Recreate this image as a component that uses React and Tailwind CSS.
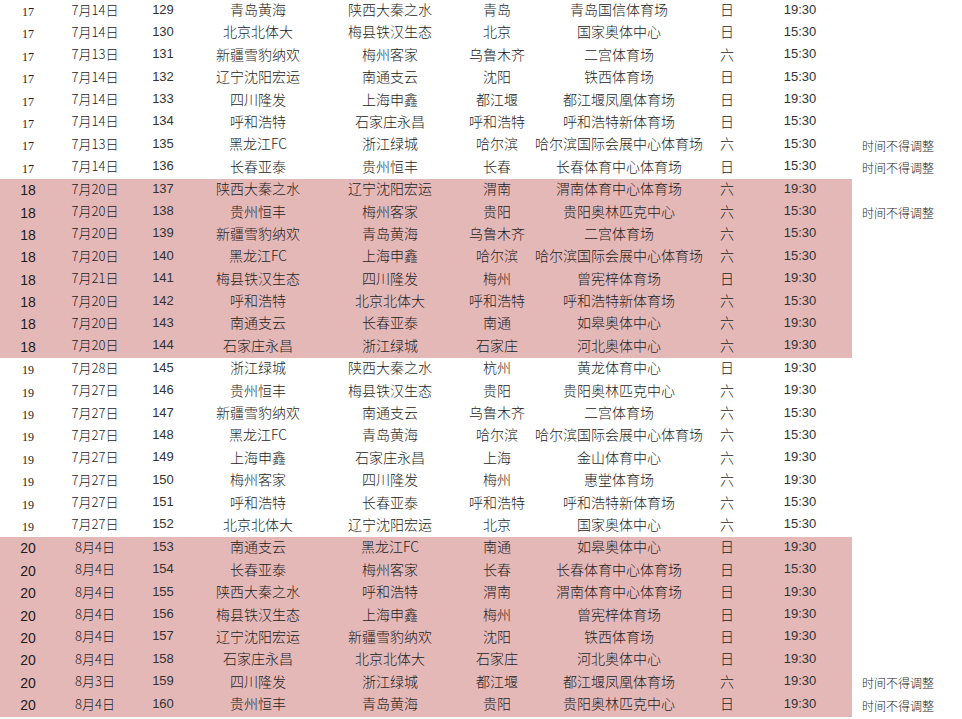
import React from "react";

const rows = [
  ["17", "7月14日", "129", "青岛黄海", "陕西大秦之水", "青岛", "青岛国信体育场", "日", "19:30", ""],
  ["17", "7月14日", "130", "北京北体大", "梅县铁汉生态", "北京", "国家奥体中心", "日", "15:30", ""],
  ["17", "7月13日", "131", "新疆雪豹纳欢", "梅州客家", "乌鲁木齐", "二宫体育场", "六", "15:30", ""],
  ["17", "7月14日", "132", "辽宁沈阳宏运", "南通支云", "沈阳", "铁西体育场", "日", "15:30", ""],
  ["17", "7月14日", "133", "四川隆发", "上海申鑫", "都江堰", "都江堰凤凰体育场", "日", "19:30", ""],
  ["17", "7月14日", "134", "呼和浩特", "石家庄永昌", "呼和浩特", "呼和浩特新体育场", "日", "15:30", ""],
  ["17", "7月13日", "135", "黑龙江FC", "浙江绿城", "哈尔滨", "哈尔滨国际会展中心体育场", "六", "15:30", "时间不得调整"],
  ["17", "7月14日", "136", "长春亚泰", "贵州恒丰", "长春", "长春体育中心体育场", "日", "15:30", "时间不得调整"],
  ["18", "7月20日", "137", "陕西大秦之水", "辽宁沈阳宏运", "渭南", "渭南体育中心体育场", "六", "19:30", ""],
  ["18", "7月20日", "138", "贵州恒丰", "梅州客家", "贵阳", "贵阳奥林匹克中心", "六", "15:30", "时间不得调整"],
  ["18", "7月20日", "139", "新疆雪豹纳欢", "青岛黄海", "乌鲁木齐", "二宫体育场", "六", "15:30", ""],
  ["18", "7月20日", "140", "黑龙江FC", "上海申鑫", "哈尔滨", "哈尔滨国际会展中心体育场", "六", "15:30", ""],
  ["18", "7月21日", "141", "梅县铁汉生态", "四川隆发", "梅州", "曾宪梓体育场", "日", "19:30", ""],
  ["18", "7月20日", "142", "呼和浩特", "北京北体大", "呼和浩特", "呼和浩特新体育场", "六", "15:30", ""],
  ["18", "7月20日", "143", "南通支云", "长春亚泰", "南通", "如皋奥体中心", "六", "19:30", ""],
  ["18", "7月20日", "144", "石家庄永昌", "浙江绿城", "石家庄", "河北奥体中心", "六", "19:30", ""],
  ["19", "7月28日", "145", "浙江绿城", "陕西大秦之水", "杭州", "黄龙体育中心", "日", "19:30", ""],
  ["19", "7月27日", "146", "贵州恒丰", "梅县铁汉生态", "贵阳", "贵阳奥林匹克中心", "六", "19:30", ""],
  ["19", "7月27日", "147", "新疆雪豹纳欢", "南通支云", "乌鲁木齐", "二宫体育场", "六", "15:30", ""],
  ["19", "7月27日", "148", "黑龙江FC", "青岛黄海", "哈尔滨", "哈尔滨国际会展中心体育场", "六", "15:30", ""],
  ["19", "7月27日", "149", "上海申鑫", "石家庄永昌", "上海", "金山体育中心", "六", "19:30", ""],
  ["19", "7月27日", "150", "梅州客家", "四川隆发", "梅州", "惠堂体育场", "六", "19:30", ""],
  ["19", "7月27日", "151", "呼和浩特", "长春亚泰", "呼和浩特", "呼和浩特新体育场", "六", "15:30", ""],
  ["19", "7月27日", "152", "北京北体大", "辽宁沈阳宏运", "北京", "国家奥体中心", "六", "15:30", ""],
  ["20", "8月4日", "153", "南通支云", "黑龙江FC", "南通", "如皋奥体中心", "日", "19:30", ""],
  ["20", "8月4日", "154", "长春亚泰", "梅州客家", "长春", "长春体育中心体育场", "日", "15:30", ""],
  ["20", "8月4日", "155", "陕西大秦之水", "呼和浩特", "渭南", "渭南体育中心体育场", "日", "19:30", ""],
  ["20", "8月4日", "156", "梅县铁汉生态", "上海申鑫", "梅州", "曾宪梓体育场", "日", "19:30", ""],
  ["20", "8月4日", "157", "辽宁沈阳宏运", "新疆雪豹纳欢", "沈阳", "铁西体育场", "日", "19:30", ""],
  ["20", "8月4日", "158", "石家庄永昌", "北京北体大", "石家庄", "河北奥体中心", "日", "19:30", ""],
  ["20", "8月3日", "159", "四川隆发", "浙江绿城", "都江堰", "都江堰凤凰体育场", "六", "19:30", "时间不得调整"],
  ["20", "8月4日", "160", "贵州恒丰", "青岛黄海", "贵阳", "贵阳奥林匹克中心", "日", "19:30", "时间不得调整"],
];

const cjk = "font-['Noto_Sans_CJK_SC','Liberation_Sans',sans-serif] font-light";
const num = "font-['Liberation_Sans',sans-serif] text-[#333]";

function Row({ r }) {
  const [week, date, no, home, away, city, venue, day, time, note] = r;
  // 18、20 轮整段底色为粉色
  const pink = week === "18" || week === "20";
  const serifWeek = week === "17" || week === "19";
  return (
    <div className="flex h-[22.4px]">
      <div
        className={`grid w-[852px] shrink-0 grid-cols-[56px_78px_58px_132px_132px_82px_162px_54px_92px_6px] items-center pb-[5px] text-[#1c1c1c] ${
          pink ? "bg-[#e5b8b8]" : "bg-white"
        }`}
      >
        {serifWeek ? (
          <span className="pt-[6px] text-center font-['Liberation_Serif',serif] text-[12px] leading-none">{week}</span>
        ) : (
          <span className="pt-[4px] text-center font-['Liberation_Sans',sans-serif] text-[14px] leading-none">{week}</span>
        )}
        <span className={`text-center text-[13px] leading-none ${cjk}`}>{date}</span>
        <span className={`text-center text-[13px] leading-none ${num}`}>{no}</span>
        <span className={`whitespace-nowrap text-center text-[14px] leading-none ${cjk}`}>{home}</span>
        <span className={`whitespace-nowrap text-center text-[14px] leading-none ${cjk}`}>{away}</span>
        <span className={`whitespace-nowrap text-center text-[14px] leading-none ${cjk}`}>{city}</span>
        <span className={`-mx-4 whitespace-nowrap text-center text-[14px] leading-none ${cjk}`}>{venue}</span>
        <span className={`text-center text-[14px] leading-none ${cjk}`}>{day}</span>
        <span className={`text-center text-[13px] leading-none ${num}`}>{time}</span>
        <span />
      </div>
      <div className={`flex flex-1 items-center pl-[10px] pt-[1px] text-[12px] leading-none text-[#1c1c1c] ${cjk}`}>
        {note}
      </div>
    </div>
  );
}

export default function App() {
  return (
    <div className="h-[719px] w-[962px] overflow-hidden bg-white">
      {rows.map((r) => (
        <Row key={r[2]} r={r} />
      ))}
    </div>
  );
}
